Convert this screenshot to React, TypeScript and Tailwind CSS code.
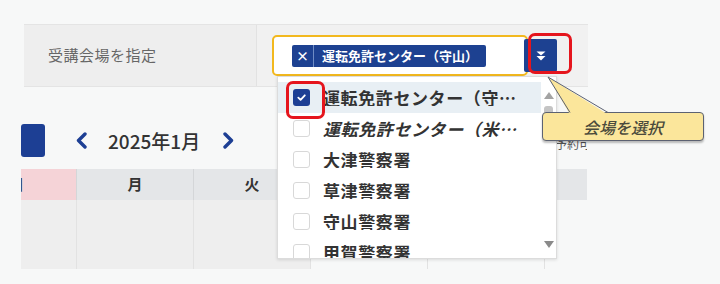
import React from "react";

const items = [
  { label: "運転免許センター（守山）", checked: true, italic: false },
  { label: "運転免許センター（米原）", checked: false, italic: true },
  { label: "大津警察署", checked: false, italic: false },
  { label: "草津警察署", checked: false, italic: false },
  { label: "守山警察署", checked: false, italic: false },
  { label: "甲賀警察署", checked: false, italic: false },
];

function Check() {
  return (
    <svg width="11" height="11" viewBox="0 0 12 12" fill="none">
      <path d="M2.5 6.2 L5 8.6 L9.6 3.6" stroke="#fff" strokeWidth="2" strokeLinecap="round" strokeLinejoin="round" />
    </svg>
  );
}

function Chevron({ dir }: { dir: "left" | "right" }) {
  return (
    <svg width="13" height="17" viewBox="0 0 13 17" fill="none">
      {dir === "left" ? (
        <path d="M10 2 L3.5 8.5 L10 15" stroke="#1d3f94" strokeWidth="3.4" strokeLinecap="round" strokeLinejoin="round" />
      ) : (
        <path d="M3 2 L9.5 8.5 L3 15" stroke="#1d3f94" strokeWidth="3.4" strokeLinecap="round" strokeLinejoin="round" />
      )}
    </svg>
  );
}

export default function App() {
  return (
    <div className="relative w-[720px] h-[284px] overflow-hidden bg-[#f7f8f8] font-['Noto_Sans_CJK_JP','Noto_Sans',sans-serif]">
      <div className="pt-[24px]">
        {/* form row */}
        <div className="ml-[24px] w-[564px] h-[63px] flex border-y border-[#e4e4e4]">
          <div className="w-[232px] bg-[#eeeeee] flex items-center pl-[24px] text-[15px] tracking-[0.5px] text-[#666]">
            受講会場を指定
          </div>
          <div className="flex-1 bg-[#f1f1f1] border-l border-[#e2e2e2] pl-[15px] flex items-center">
            <div className="w-[256px] h-[41px] border-2 border-[#f2b81e] rounded-[5px] bg-white flex items-center pl-[18px]">
              <div className="h-[22px] flex bg-[#1d4191] rounded-[2px] text-white">
                <div className="w-[22px] flex items-center justify-center text-[13px] font-bold border-r border-[#6f8cc4]">×</div>
                <div className="px-[8px] flex items-center text-[13px] font-bold leading-none whitespace-nowrap">運転免許センター（守山）</div>
              </div>
            </div>
            <div className="ml-[-4px] w-[33px] h-[33px] bg-[#1d4191] rounded-[2px] flex items-center justify-center">
              <svg width="12" height="12" viewBox="0 0 12 12">
                <path d="M1.5 1.5 H10.5 L6 5.5 Z" fill="#fff" />
                <path d="M1.5 6 H10.5 L6 10.5 Z" fill="#fff" />
              </svg>
            </div>
          </div>
        </div>

        {/* calendar */}
        <div className="ml-[21px] w-[566px] mt-[37px]">
          <div className="h-[33px] flex items-center">
            <div className="w-[24px] h-[33px] bg-[#1d3f94] rounded-[3px]" />
            <div className="ml-[30px] flex items-center"><Chevron dir="left" /></div>
            <div className="ml-[20px] text-[19px] font-medium text-[#333] leading-none">2025年1月</div>
            <div className="ml-[22px] flex items-center"><Chevron dir="right" /></div>
            <div className="ml-auto mt-[6px] w-[32px] overflow-hidden whitespace-nowrap text-[12px] text-[#555]">予約可能</div>
          </div>
          <div className="mt-[12px] grid grid-cols-[55px_117px_117px_117px_117px_43px] h-[31px] text-[15px] font-bold text-[#333]">
            <div className="bg-[#f5d3d7] overflow-hidden flex items-center">
              <span className="ml-[-12px]">日</span>
            </div>
            <div className="bg-[#e4e6e8] border-l border-[#d4d6d8] flex items-center justify-center">月</div>
            <div className="bg-[#e4e6e8] border-l border-[#d4d6d8] flex items-center justify-center">火</div>
            <div className="bg-[#e4e6e8] border-l border-[#d4d6d8]" />
            <div className="bg-[#e4e6e8] border-l border-[#d4d6d8]" />
            <div className="bg-[#e4e6e8] border-l border-[#d4d6d8]" />
          </div>
          <div className="grid grid-cols-[55px_117px_117px_117px_117px_43px] h-[69px]">
            <div className="bg-[#eeeeee]" />
            <div className="bg-[#eeeeee] border-l border-[#e2e2e2]" />
            <div className="bg-[#eeeeee] border-l border-[#e2e2e2]" />
            <div className="border-l border-[#e2e2e2]" />
            <div className="border-l border-[#e2e2e2]" />
            <div className="border-l border-[#e2e2e2]" />
          </div>
        </div>
      </div>

      {/* dropdown list */}
      <div className="absolute left-[277px] top-[76px] w-[280px] h-[183px] bg-white border border-[#dcdcdc] shadow-[0_1px_3px_rgba(0,0,0,0.12)] flex">
        <div className="flex-1 pt-[5px] overflow-hidden">
          {items.map((it) => (
            <div
              key={it.label}
              className={`h-[31px] flex items-center pl-[15px] ${it.checked ? "bg-[#e8eff4]" : ""}`}
            >
              {it.checked ? (
                <div className="w-[17px] h-[17px] shrink-0 rounded-[3px] bg-[#1d3f94] flex items-center justify-center">
                  <Check />
                </div>
              ) : (
                <div className="w-[17px] h-[17px] shrink-0 rounded-[3px] bg-white border border-[#d8d8d8]" />
              )}
              <div
                className={`ml-[13px] w-[205px] truncate text-[17px] tracking-[0.6px] font-bold text-[#333] leading-none ${it.italic ? "italic" : ""}`}
              >
                {it.label}
              </div>
            </div>
          ))}
        </div>
        <div className="w-[15px] flex flex-col items-center">
          <svg className="mt-[15px]" width="10" height="7" viewBox="0 0 10 7">
            <path d="M0 7 L5 0 L10 7 Z" fill="#a3a3a3" />
          </svg>
          <div className="mt-[7px] w-[9px] h-[34px] rounded-[3px] bg-[#c4c4c4]" />
          <div className="flex-1" />
          <svg className="mb-[10px]" width="10" height="7" viewBox="0 0 10 7">
            <path d="M0 0 L10 0 L5 7 Z" fill="#8a8a8a" />
          </svg>
        </div>
      </div>

      {/* annotation: red highlights */}
      <div className="absolute left-[528px] top-[33px] w-[44px] h-[41px] border-[3px] border-[#e5151d] rounded-[7px]" />
      <div className="absolute left-[286px] top-[81px] w-[39px] h-[38px] border-[3px] border-[#e5151d] rounded-[7px]" />

      {/* annotation: callout */}
      <div className="absolute left-[542px] top-[112px] w-[162px] h-[29px] bg-[#fbe69b] border border-[#5c6272] rounded-[4px] shadow-[0_2px_2px_rgba(0,0,0,0.25)] flex items-center justify-center text-[16px] italic font-medium text-[#4a4a3c]">
        会場を選択
      </div>
      <svg className="absolute left-[540px] top-[70px]" width="80" height="46" viewBox="0 0 80 46">
        <polygon points="8,7 30,44.5 68,44.5" fill="#fbe69b" />
        <polyline points="30,42.5 8,7 68,42.5" fill="none" stroke="#5c6272" strokeWidth="1" />
      </svg>
    </div>
  );
}
